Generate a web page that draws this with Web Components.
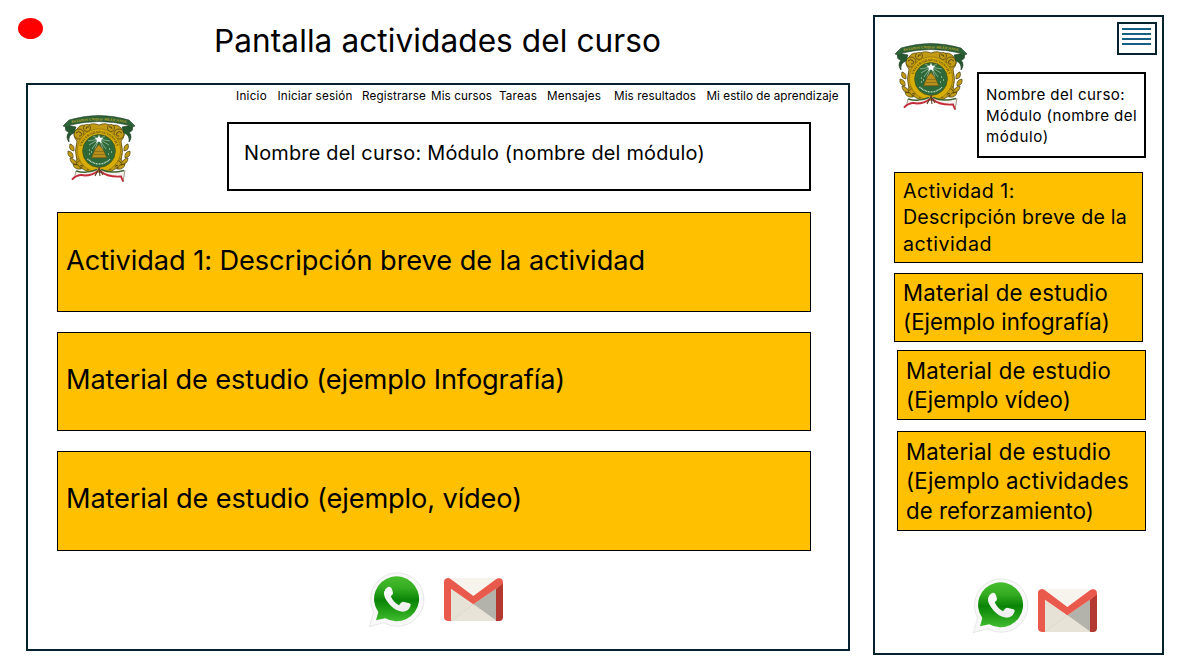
<!DOCTYPE html>
<html lang="es">
<head>
<meta charset="utf-8">
<title>Pantalla actividades del curso</title>
<style>
body{margin:0;background:#fff;color:#000;font-family:Inter,Roboto,sans-serif;width:1178px;height:663px;overflow:hidden}
</style>
</head>
<body>
<course-page></course-page>
<script>
function define(name, html, ready) {
  const tpl = document.createElement('template');
  tpl.innerHTML = html;
  customElements.define(name, class extends HTMLElement {
    constructor() {
      super();
      this.attachShadow({mode: 'open'}).append(tpl.content.cloneNode(true));
    }
    connectedCallback() { if (ready) ready(this); }
  });
}

// One line of text whose tracking is adjusted to fill a given width.
define('fit-text', `<style>:host{display:block;white-space:nowrap}span{display:inline-block}</style><span><slot></slot></span>`, el => {
  const span = el.shadowRoot.querySelector('span');
  const target = parseFloat(el.getAttribute('w'));
  const n = el.textContent.length;
  span.style.letterSpacing = '0px';
  const width = span.getBoundingClientRect().width;
  if (width && target) span.style.letterSpacing = ((target - width) / n).toFixed(4) + 'px';
  el.style.width = target + 'px';
});

define('status-dot', `<style>:host{display:block;width:25px;height:21px;border-radius:50%;background:#f00}</style>`);

define('nav-bar', `<style>:host{display:flex;height:22px;align-items:center;font-size:11.7px;line-height:22px}</style><slot></slot>`);

define('course-box', `<style>:host{display:flex;flex-direction:column;box-sizing:border-box;border:2px solid #000;background:#fff}</style><slot></slot>`);

define('activity-card', `<style>:host{display:flex;flex-direction:column;justify-content:center;box-sizing:border-box;border:1px solid #000;background:#ffc000;padding-left:8px}</style><slot></slot>`);

define('menu-button', `<style>:host{display:flex;flex-direction:column;gap:3px;box-sizing:border-box;width:40px;height:33px;border:2px solid #06222f;padding:4px 4px 0 3px}i{display:block;height:2px;background:#156082}</style><i></i><i></i><i></i><i></i>`);

define('university-crest', `<style>:host{display:block;width:72px;height:68px}svg{display:block;overflow:visible}</style>
<svg width="72" height="68" viewBox="0 0 72 68">
  <defs>
    <path id="top" d="M5 8.9Q36 1.9 67 8.9"/>
    <path id="ring" d="M18 39A18.2 18.2 0 1 1 54 39"/>
  </defs>
  <g fill="#c29a14" stroke="#4b4212" stroke-width=".7">
    <path d="M14 14Q18 8 24 11Q29 7 36 10Q43 7 48 11Q54 8 59 14Q64 20 58 26Q61 36 58 46Q61 53 52 54Q44 60 36 57Q28 60 20 54Q11 53 14 46Q11 36 14 26Q8 20 14 14Z"/>
    <circle cx="16" cy="19" r="5"/><circle cx="56" cy="19" r="5"/>
    <circle cx="17" cy="48" r="4.6"/><circle cx="55" cy="48" r="4.6"/>
    <circle cx="24" cy="13" r="3.6"/><circle cx="48" cy="13" r="3.6"/>
    <path d="M7 29q5 1 4 7q-6-1-4-7ZM5 36q6 1 5 7q-6-1-5-7ZM7 43q6 1 7 7q-7-1-7-7ZM10 49q6 0 8 5q-7 1-8-5ZM65 29q-5 1-4 7q6-1 4-7ZM67 36q-6 1-5 7q6-1 5-7ZM65 43q-6 1-7 7q7-1 7-7ZM62 49q-6 0-8 5q7 1 8-5Z"/>
  </g>
  <g fill="none" stroke="#5a4c14" stroke-width="1">
    <path d="M13 18q3-3 5 0t-2 3M59 18q-3-3-5 0t2 3M14 48q2-4 5-1t-2 4M58 48q-2-4-5-1t2 4M23 14q0-3 3-2M49 14q0-3-3-2M24 55q5-3 9 1M48 55q-5-3-9 1"/>
  </g>
  <circle cx="36" cy="35.5" r="21.6" fill="#d8ad08" stroke="#8a7010" stroke-width=".6"/>
  <circle cx="36" cy="36" r="16.4" fill="#2e6a39" stroke="#4c5a17" stroke-width=".8"/>
  <g stroke="#dbe6d8" stroke-width=".5"><path d="M36 24L25 26M36 24L26 30M36 24L29 34M36 24L32 34M36 24L40 34M36 24L43 34M36 24L46 30M36 24L47 26M36 24L30 21M36 24L42 21"/></g>
  <path d="M36 19.8l1.2 3 3.2.2-2.5 2 .9 3.1-2.8-1.7-2.8 1.7.9-3.1-2.5-2 3.2-.2Z" fill="#fff"/>
  <path d="M36 29.5L39.5 33.5L43.7 42.7H28.6L32.5 33.5Z" fill="#b8901b" stroke="#6b5210" stroke-width=".6"/>
  <path d="M32 36.5h8M31 39.5h10" stroke="#81651a" stroke-width=".7"/>
  <path d="M26 35h1M28 37h1M26 39h1M46 34h1M48 37h1M45 39h1" stroke="#dde9dc"/>
  <path d="M3 10Q1 17 6 17Q2 22 6 27Q5 20 11 18L13 12ZM69 10Q71 17 66 17Q70 22 66 27Q67 20 61 18L59 12Z" fill="#25572f" stroke="#1c3520" stroke-width=".6"/>
  <path d="M0 11L6 5Q36-4 66 5L72 11L67 13L65 10Q36 3 7 10L5 13Z" fill="#2d6337" stroke="#233e25" stroke-width=".6"/>
  <path d="M14 55Q26 59 35 54L34 60Q27 61 21 60.500Q14 61 9 65Q13 60 14 55Z" fill="#f6f1ec"/>
  <path d="M37 54Q46 59 62 55L60 67L57 61Q46 63 38 59Z" fill="#f6f1ec"/>
  <path d="M13 56Q24 59 34 54.500M38 54.500Q47 59 61 55.500" fill="none" stroke="#3c6433" stroke-width="1.4"/>
  <path d="M9 65Q13 60 13 56M62 55L60 67" fill="none" stroke="#5e5a35" stroke-width=".6"/>
  <path d="M9 64.500Q15 58.500 22 60.500Q29 60.500 35 56M37 56Q45 62.500 58 61.500L60 66.500" fill="none" stroke="#c22c3a" stroke-width="1.9"/>
  <path d="M32 61L36 53L37 61M36 53L40 60" stroke="#5b3a26" fill="none" stroke-width="1.1"/>
  <g font-family="Liberation Serif,serif" font-weight="bold">
    <text font-size="3.6" fill="#c4aa27"><textPath href="#top" startOffset="50%" text-anchor="middle">ESTADOS UNIDOS MEXICANOS</textPath></text>
    <text font-size="3.5" fill="#51450d"><textPath href="#ring" startOffset="50%" text-anchor="middle">UNIVERSIDAD AUTONOMA</textPath></text>
  </g>
  <path d="M24.500 44Q36 54 47.500 44" fill="none" stroke="#dce6d9" stroke-width="1.2" stroke-dasharray="1 .6"/>
</svg>`);

define('whatsapp-icon', `<style>:host{display:block;width:56px;height:57px}svg{display:block}</style>
<svg width="56" height="57" viewBox="27 33 168 171">
  <defs>
    <linearGradient id="g" x1="0" y1="0" x2="0" y2="1"><stop offset="0" stop-color="#46bd2d"/><stop offset=".25" stop-color="#36ad23"/><stop offset=".53" stop-color="#0a8405"/><stop offset=".8" stop-color="#28a41b"/><stop offset="1" stop-color="#43bd31"/></linearGradient>
    <linearGradient id="w" x1="0" y1="0" x2="0" y2="1"><stop offset="0" stop-color="#fff"/><stop offset="1" stop-color="#ededed"/></linearGradient>
  </defs>
  <path d="M28 200L41 156A80 80 0 1 1 72 188Z" fill="#f8f8f8" stroke="#dedede" stroke-width="2"/>
  <path d="M48 181L55 156A67.5 67.5 0 1 1 76 175Z" fill="url(#g)"/>
  <path d="M84 81Q93 78 96 88L99 98Q100 103 92 109Q101 128 117 136Q123 125 129 125L148 130Q154 132 151 139Q145 155 128 155Q107 153 90 135Q70 113 72 97Q74 86 84 81Z" fill="url(#w)"/>
</svg>`);

define('gmail-icon', `<style>:host{display:block;width:59px;height:45px}svg{display:block}</style>
<svg width="59" height="45" viewBox="252 51 177 135">
  <path d="M264 54H418V183H264Z" fill="#f7f4ed"/>
  <path d="M272 86L340 133L408 86V183H272Z" fill="#e6e2d6"/>
  <path d="M340 133L410 84V183Z" fill="#b4b3ab"/>
  <path d="M340 133L410 183H272Z" fill="#e7e3d7"/>
  <path d="M340 133L272 183" stroke="#d3d0c5" stroke-width="1.5"/>
  <path d="M408 86L429 68V172Q429 183 418 183H408Z" fill="#b33931"/>
  <path d="M273 183H263Q252 182 252 171V67Q252 55 263 54Q268 54 273 58L340 108L408 58Q414 53 421 55Q429 58 429 68Q429 72 423 76L340 133L273 86Z" fill="#e9594c"/>
</svg>`);

define('desktop-mockup', `<style>
:host{display:block;box-sizing:border-box;width:824px;height:568px;border:2px solid #06222f}
nav-bar{margin-left:208px}
.head{display:flex;align-items:flex-start;height:105px;padding-left:35px}
university-crest{margin-top:8px}
course-box{width:584px;height:69px;margin:15px 0 0 92px;padding:16px 0 0 15px;font-size:19.9px;line-height:26px}
.cards{display:grid;grid-template-rows:100px 99px 100px;row-gap:20px;width:754px;margin-left:29px;font-size:27.2px;line-height:34px}
.cards activity-card{padding-bottom:2px}
.cards activity-card + activity-card{padding-bottom:4px}
footer{display:flex;align-items:flex-start;padding:20px 0 0 341px}
gmail-icon{margin:6px 0 0 19px}
</style>
<nav-bar>
<fit-text w="31">Inicio</fit-text>
<fit-text w="75" style="margin-left:10.5px">Iniciar sesión</fit-text>
<fit-text w="64" style="margin-left:9.5px">Registrarse</fit-text>
<fit-text w="61" style="margin-left:5px">Mis cursos</fit-text>
<fit-text w="38" style="margin-left:7px">Tareas</fit-text>
<fit-text w="54" style="margin-left:10px">Mensajes</fit-text>
<fit-text w="82" style="margin-left:13px">Mis resultados</fit-text>
<fit-text w="132" style="margin-left:10.5px">Mi estilo de aprendizaje</fit-text>
</nav-bar>
<div class="head"><university-crest></university-crest><course-box><fit-text w="461">Nombre del curso: Módulo (nombre del módulo)</fit-text></course-box></div>
<div class="cards">
<activity-card><fit-text w="579">Actividad 1: Descripción breve de la actividad</fit-text></activity-card>
<activity-card><fit-text w="499">Material de estudio (ejemplo Infografía)</fit-text></activity-card>
<activity-card><fit-text w="456">Material de estudio (ejemplo, vídeo)</fit-text></activity-card>
</div>
<footer><whatsapp-icon></whatsapp-icon><gmail-icon></gmail-icon></footer>`);

define('mobile-mockup', `<style>
:host{display:block;box-sizing:border-box;width:291px;height:640px;border:2px solid #06222f}
.head{display:grid;grid-template-columns:72px 180px;column-gap:10px;height:155px;padding-left:20px;box-sizing:border-box}
university-crest{margin-top:26px}
.side{display:flex;flex-direction:column;padding-top:5px}
menu-button{align-self:flex-end}
course-box{width:169px;height:86px;margin-top:17px;padding:9.5px 0 0 7px;font-size:15.1px;line-height:21px}
.cards{display:flex;flex-direction:column;width:249px;margin-left:19px;font-size:22.2px;line-height:29.3px}
.one{height:91px;font-size:19.6px;line-height:26.5px}
.two{height:69px;margin-top:10px;padding-bottom:1px}
.three{height:70px;margin:8px -3px 0 3px}
.four{height:100px;margin:11px -3px 0 3px}
footer{display:flex;align-items:flex-start;padding:46px 0 0 98px}
gmail-icon{margin:11px 0 0 9px}
</style>
<div class="head"><university-crest></university-crest><div class="side"><menu-button></menu-button>
<course-box><fit-text w="139">Nombre del curso:</fit-text><fit-text w="151">Módulo (nombre del</fit-text><fit-text w="63">módulo)</fit-text></course-box></div></div>
<div class="cards">
<activity-card class="one"><fit-text w="112">Actividad 1:</fit-text><fit-text w="224">Descripción breve de la</fit-text><fit-text w="89">actividad</fit-text></activity-card>
<activity-card class="two"><fit-text w="205">Material de estudio</fit-text><fit-text w="207">(Ejemplo infografía)</fit-text></activity-card>
<activity-card class="three"><fit-text w="205">Material de estudio</fit-text><fit-text w="165">(Ejemplo vídeo)</fit-text></activity-card>
<activity-card class="four"><fit-text w="205">Material de estudio</fit-text><fit-text w="223">(Ejemplo actividades</fit-text><fit-text w="188">de reforzamiento)</fit-text></activity-card>
</div>
<footer><whatsapp-icon></whatsapp-icon><gmail-icon></gmail-icon></footer>`);

define('course-page', `<style>
:host{display:flex;align-items:flex-start;gap:23px}
.left{width:850px}
header{display:flex;align-items:flex-start;height:83px;padding-left:18px;box-sizing:border-box}
status-dot{margin-top:18px}
h1{margin:20px 0 0 171px;font-size:31.6px;line-height:42px;font-weight:400}
desktop-mockup{margin-left:26px}
mobile-mockup{margin-top:15px}
</style>
<div class="left"><header><status-dot></status-dot><h1><fit-text w="447">Pantalla actividades del curso</fit-text></h1></header><desktop-mockup></desktop-mockup></div>
<mobile-mockup></mobile-mockup>`);
</script>
</body>
</html>
